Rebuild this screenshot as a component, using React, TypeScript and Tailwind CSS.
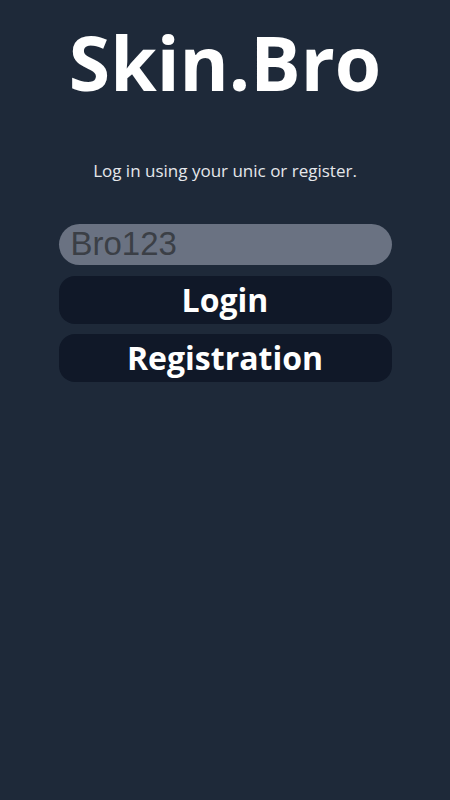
export default function App() {
  return (
    <div className="min-h-screen bg-gray-800 text-white" style={{ fontFamily: '"Open Sans", sans-serif' }}>
      <div className="flex flex-col items-center pt-[12px]">
        <h1 className="text-[75px] leading-[100px] font-bold">Skin.Bro</h1>
        <p className="mt-[46px] text-[17px] text-gray-200">Log in using your unic or register.</p>

        <div className="mt-[40px] flex w-[333px] flex-col gap-[10px]">
          <input
            type="text"
            placeholder="Bro123"
            className="h-[41px] w-full rounded-full bg-gray-500 px-3 text-[33px] text-[#3b3f46] outline-none placeholder:text-[#3b3f46]"
            style={{ fontFamily: '"Liberation Sans", Arial, sans-serif' }}
          />
          <button className="mt-[1px] h-[48px] w-full rounded-2xl bg-gray-900 text-[32px] font-bold">Login</button>
          <button className="h-[48px] w-full rounded-2xl bg-gray-900 text-[32px] font-bold">Registration</button>
        </div>
      </div>
    </div>
  );
}
